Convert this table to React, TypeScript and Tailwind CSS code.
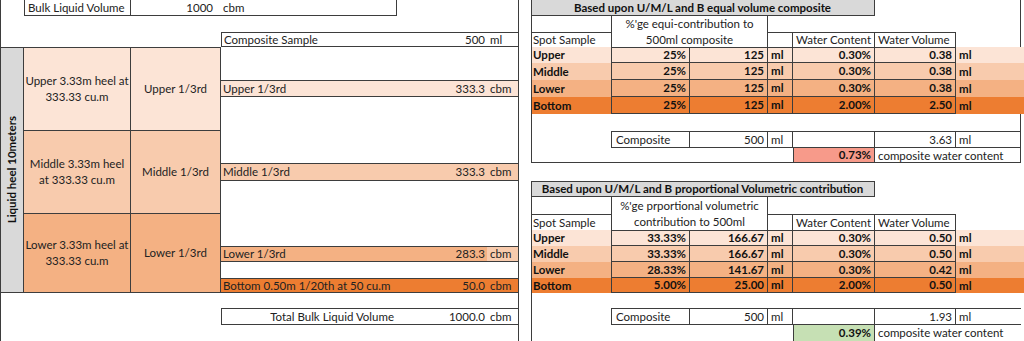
import React from "react";

const BC = "border-[#3d3d3d]";

type DR = {
  pos: string;
  bg: string;
  first?: boolean;
  label: string;
  pct: string;
  val: string;
  wc: string;
  wv: string;
};

function DataRow({ pos, bg, first, label, pct, val, wc, wv }: DR) {
  const t = first ? "border-t" : "";
  return (
    <div className={`${pos} col-[8/16] grid grid-cols-subgrid ${bg} font-bold text-[#111]`}>
      <div className="flex items-center pl-[2px]">{label}</div>
      <div className={`flex items-center justify-end pr-[3px] border-l border-r border-b ${t} ${BC}`}>{pct}</div>
      <div className={`flex items-center justify-end pr-[3px] border-r border-b ${t} ${BC}`}>{val}</div>
      <div className={`flex items-center pl-[3px] border-r border-b ${t} ${BC}`}>ml</div>
      <div className={`flex items-center justify-end pr-[3px] border-r border-b ${t} ${BC}`}>{wc}</div>
      <div className={`flex items-center justify-end pr-[3px] border-r border-b ${t} ${BC}`}>{wv}</div>
      <div className="flex items-center pl-[3px]">ml</div>
      <div />
    </div>
  );
}

function MidRow({
  pos,
  bg,
  label,
  val,
  unitBg = "",
  extra = "",
  right = false,
}: {
  pos: string;
  bg: string;
  label: string;
  val: string;
  unitBg?: string;
  extra?: string;
  right?: boolean;
}) {
  return (
    <div className={`${pos} col-[4/7] grid grid-cols-subgrid ${bg} border-t border-b ${extra} ${BC}`}>
      <div className={`flex items-center whitespace-nowrap ${right ? "justify-end pr-[3px]" : "pl-[2px]"}`}>{label}</div>
      <div className="flex items-center justify-end pr-[2px]">{val}</div>
      <div className={`flex items-center pl-[3px] ${unitBg}`}>{label === "Composite Sample" ? "ml" : "cbm"}</div>
    </div>
  );
}

function CompRow({ pos, wv }: { pos: string; wv: string }) {
  return (
    <div className={`${pos} col-[9/15] grid grid-cols-subgrid`}>
      <div className={`flex items-center pl-[4px] border ${BC}`}>Composite</div>
      <div className={`flex items-center justify-end pr-[3px] border-t border-r border-b ${BC}`}>500</div>
      <div className={`flex items-center pl-[3px] border-t border-r border-b ${BC}`}>ml</div>
      <div className={`border-t border-r border-b ${BC}`} />
      <div className={`flex items-center justify-end pr-[3px] border-t border-r border-b ${BC}`}>{wv}</div>
      <div className={`flex items-center pl-[3px] border-t border-b ${BC}`}>ml</div>
    </div>
  );
}

function HeadBoxes({ pos }: { pos: string }) {
  return (
    <div className={`${pos} col-[11/14] grid grid-cols-subgrid`}>
      <div className={`border-t border-r ${BC}`} />
      <div className={`flex items-center pl-[3px] border-t border-r ${BC}`}>Water Content</div>
      <div className={`flex items-center pl-[3px] border-t border-r ${BC}`}>Water Volume</div>
    </div>
  );
}

export default function App() {
  return (
    <div className="w-[1024px] h-[341px] overflow-hidden bg-white text-[#222] text-[11.5px] leading-none [font-family:Lato,'Open_Sans',sans-serif] grid grid-cols-[24px_107px_90px_176px_90px_31px_13px_80px_79px_78px_25px_82px_81px_65px_3px] grid-rows-[16px_16px_15px_16px_17px_17px_17px_17px_17px_15px_18px_16px_17px_16px_16px_16px_16px_15px_15px_17px_16px]">
      {/* right border of top table (under rows) */}
      <div className={`col-[14/15] row-[1/11] border-r ${BC}`} />

      {/* ---------- LEFT SECTION ---------- */}
      <div className={`col-[2/3] row-[1/2] flex items-center pl-[3px] border-l border-r border-b ${BC}`}>Bulk Liquid Volume</div>
      <div className={`col-[3/4] row-[1/2] flex items-center justify-end pr-[8px] border-b ${BC}`}>1000</div>
      <div className={`col-[4/5] row-[1/2] flex items-center pl-[2px] border-r border-b ${BC}`}>cbm</div>

      <MidRow pos="row-[3/4]" bg="bg-white" label="Composite Sample" val="500" extra="border-l" />

      <div className={`col-[1/2] row-[4/19] bg-[#d9d9d9] border-t border-b border-r ${BC} flex items-center justify-center`}>
        <span className="[writing-mode:vertical-rl] rotate-180 font-bold text-[#111] whitespace-nowrap">Liquid heel 10meters</span>
      </div>

      <div className={`col-[2/3] row-[4/9] bg-[#fce4d6] border-t border-r border-b ${BC} flex flex-col items-center justify-center text-center leading-[16.5px]`}>
        <div>Upper 3.33m heel at</div>
        <div>333.33 cu.m</div>
      </div>
      <div className={`col-[3/4] row-[4/9] bg-[#fce4d6] border-t border-r border-b ${BC} flex items-center justify-center`}>Upper 1/3rd</div>

      <div className={`col-[2/3] row-[9/14] bg-[#f8cbad] border-r border-b ${BC} flex flex-col items-center justify-center text-center leading-[16.5px]`}>
        <div>Middle 3.33m heel</div>
        <div>at 333.33 cu.m</div>
      </div>
      <div className={`col-[3/4] row-[9/14] bg-[#f8cbad] border-r border-b ${BC} flex items-center justify-center`}>Middle 1/3rd</div>

      <div className={`col-[2/3] row-[14/19] bg-[#f4b183] border-r border-b ${BC} flex flex-col items-center justify-center text-center leading-[16.5px]`}>
        <div>Lower 3.33m heel at</div>
        <div>333.33 cu.m</div>
      </div>
      <div className={`col-[3/4] row-[14/19] bg-[#f4b183] border-r border-b ${BC} flex items-center justify-center`}>Lower 1/3rd</div>

      <MidRow pos="row-[6/7]" bg="bg-[#fce4d6]" label="Upper 1/3rd" val="333.3" />
      <MidRow pos="row-[11/12]" bg="bg-[#f8cbad]" label="Middle 1/3rd" val="333.3" />
      <MidRow pos="row-[16/17]" bg="bg-[#f4b183]" label="Lower 1/3rd" val="283.3" unitBg="bg-[#f8cbad]" />
      <MidRow pos="row-[18/19]" bg="bg-[#ed7d31]" label="Bottom 0.50m 1/20th at 50 cu.m" val="50.0" />
      <MidRow pos="row-[20/21]" bg="bg-white" label="Total Bulk Liquid Volume" val="1000.0" extra="border-l" right />

      {/* ---------- TOP RIGHT TABLE ---------- */}
      <div className={`col-[8/13] row-[1/2] bg-[#d9d9d9] border-r border-b ${BC} flex items-center justify-center font-bold text-[#111] whitespace-nowrap`}>
        Based upon U/M/L and B equal volume composite
      </div>
      <div className={`col-[9/11] row-[2/4] border-l border-r ${BC} flex flex-col`}>
        <div className="h-[16px] flex items-center justify-center">%'ge equi-contribution to</div>
        <div className="flex-1 flex items-center justify-center">500ml composite</div>
      </div>
      <div className={`col-[8/9] row-[3/4] border-t ${BC} flex items-center pl-[2px]`}>Spot Sample</div>
      <HeadBoxes pos="row-[3/4]" />

      <DataRow pos="row-[4/5]" bg="bg-[#fce4d6]" first label="Upper" pct="25%" val="125" wc="0.30%" wv="0.38" />
      <DataRow pos="row-[5/6]" bg="bg-[#f8cbad]" label="Middle" pct="25%" val="125" wc="0.30%" wv="0.38" />
      <DataRow pos="row-[6/7]" bg="bg-[#f4b183]" label="Lower" pct="25%" val="125" wc="0.30%" wv="0.38" />
      <DataRow pos="row-[7/8]" bg="bg-[#ed7d31]" label="Bottom" pct="25%" val="125" wc="2.00%" wv="2.50" />

      <CompRow pos="row-[9/10]" wv="3.63" />
      <div className={`col-[12/13] row-[10/11] bg-[#f79a8a] border-l border-r border-b ${BC} flex items-center justify-end pr-[3px] font-bold text-[#111]`}>0.73%</div>
      <div className="col-[13/15] row-[10/11] flex items-center pl-[3px] whitespace-nowrap">composite water content</div>

      {/* ---------- BOTTOM RIGHT TABLE ---------- */}
      <div className={`col-[8/13] row-[12/13] bg-[#d9d9d9] border-t border-r border-b ${BC} flex items-center justify-center font-bold text-[#111] whitespace-nowrap`}>
        Based upon U/M/L and B proportional Volumetric contribution
      </div>
      <div className={`col-[9/11] row-[13/15] border-l border-r ${BC} flex flex-col`}>
        <div className="h-[17px] flex items-center justify-center">%'ge prportional volumetric</div>
        <div className="flex-1 flex items-center justify-center">contribution to 500ml</div>
      </div>
      <div className={`col-[8/9] row-[14/15] border-t ${BC} flex items-center pl-[2px]`}>Spot Sample</div>
      <HeadBoxes pos="row-[14/15]" />

      <DataRow pos="row-[15/16]" bg="bg-[#fce4d6]" first label="Upper" pct="33.33%" val="166.67" wc="0.30%" wv="0.50" />
      <DataRow pos="row-[16/17]" bg="bg-[#f8cbad]" label="Middle" pct="33.33%" val="166.67" wc="0.30%" wv="0.50" />
      <DataRow pos="row-[17/18]" bg="bg-[#f4b183]" label="Lower" pct="28.33%" val="141.67" wc="0.30%" wv="0.42" />
      <DataRow pos="row-[18/19]" bg="bg-[#ed7d31]" label="Bottom" pct="5.00%" val="25.00" wc="2.00%" wv="0.50" />

      <CompRow pos="row-[20/21]" wv="1.93" />
      <div className={`col-[12/13] row-[21/22] bg-[#c6e0b4] border-l border-r ${BC} flex items-center justify-end pr-[3px] font-bold text-[#111]`}>0.39%</div>
      <div className="col-[13/15] row-[21/22] flex items-center pl-[3px] whitespace-nowrap">composite water content</div>

      {/* ---------- overlay lines ---------- */}
      <div className={`col-[1/2] row-[1/22] border-l ${BC} pointer-events-none`} />
      <div className={`col-[7/8] row-[1/22] border-l ${BC} pointer-events-none`} />
      <div className={`col-[8/15] row-[1/11] border-l border-b ${BC} pointer-events-none`} />
      <div className={`col-[8/9] row-[12/22] border-l ${BC} pointer-events-none`} />
    </div>
  );
}
